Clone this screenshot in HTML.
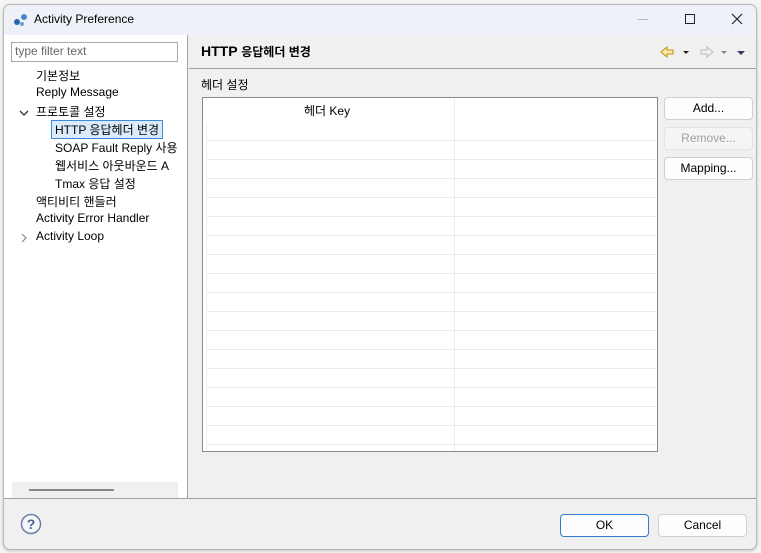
<!DOCTYPE html>
<html><head><meta charset="utf-8"><style>
*{margin:0;padding:0;box-sizing:border-box}
body{width:761px;height:553px;background:#f5f5f5;position:relative;overflow:hidden;font-family:"Liberation Sans","Noto Sans CJK KR",sans-serif;font-size:12px;color:#000}
.win{position:absolute;left:3px;top:4px;width:754px;height:546px;background:#f0f0f0;border:1px solid #b8b8b8;border-radius:7px;overflow:hidden;box-shadow:0 1px 3px rgba(0,0,0,.2)}
.title{position:absolute;left:0;top:0;width:100%;height:30px;background:#eef2f8}
.title span{position:absolute;left:30px;top:7px;font-size:12px}
.abs{position:absolute}
.left{position:absolute;left:0;top:30px;width:184px;height:463px;background:#fff;border-right:1px solid #a0a0a0}
.filter{position:absolute;left:7px;top:7px;width:167px;height:20px;border:1px solid #a8a8a8;color:#666;padding:1px 3px;font-size:12px}
.t{position:absolute;font-size:12px;white-space:nowrap}
.sel{border:1px solid #3b8bd8;background:#dcebfc;padding:0 3px;left:47px!important}
.btn{position:absolute;background:#fdfdfd;border:1px solid #d0d0d0;border-radius:4px;text-align:center;line-height:20px;font-size:12px}
.tbl{position:absolute;left:198px;top:92px;width:456px;height:355px;background:#fff;border:1px solid #8a8a8a}
.row{position:absolute;left:3px;width:450px;height:1px;background:#eaeaea}
</style></head><body>
<div class="win">
<div class="title">
<svg class="abs" style="left:9px;top:7px" width="16" height="16" viewBox="0 0 16 16"><circle cx="4" cy="10" r="3" fill="#2f62a8"/><circle cx="11" cy="5" r="3" fill="#4a86d0"/><circle cx="9" cy="12" r="2" fill="#6aa0e0"/></svg>
<span>Activity Preference</span>
<div class="abs" style="left:634px;top:14px;width:10px;height:1px;background:#bbb"></div>
<div class="abs" style="left:681px;top:9px;width:10px;height:10px;border:1px solid #222"></div>
<svg class="abs" style="left:727px;top:8px" width="12" height="12"><path d="M1 1L11 11M11 1L1 11" stroke="#222" stroke-width="1.2"/></svg>
</div>
<div class="left">
<div class="filter">type filter text</div>
<div class="t" style="left:32px;top:32px">기본정보</div>
<div class="t" style="left:32px;top:50px">Reply Message</div>
<svg class="abs" style="left:15px;top:74px" width="10" height="8"><path d="M1 2L5 6L9 2" stroke="#333" fill="none" stroke-width="1.3"/></svg>
<div class="t" style="left:32px;top:68px">프로토콜 설정</div>
<div class="t sel" style="top:85px">HTTP 응답헤더 변경</div>
<div class="t" style="left:51px;top:104px">SOAP Fault Reply 사용</div>
<div class="t" style="left:51px;top:122px">웹서비스 아웃바운드 A</div>
<div class="t" style="left:51px;top:140px">Tmax 응답 설정</div>
<div class="t" style="left:32px;top:158px">액티비티 핸들러</div>
<div class="t" style="left:32px;top:176px">Activity Error Handler</div>
<svg class="abs" style="left:16px;top:198px" width="8" height="10"><path d="M2 1L6 5L2 9" stroke="#888" fill="none" stroke-width="1.2"/></svg>
<div class="t" style="left:32px;top:194px">Activity Loop</div>
<div class="abs" style="left:8px;top:447px;width:166px;height:16px;background:#f0f0f0"></div>
<div class="abs" style="left:25px;top:454px;width:85px;height:2px;background:#888"></div>
</div>
<div class="abs" style="left:185px;top:63px;width:569px;height:1px;background:#a0a0a0"></div>
<div class="t" style="left:197px;top:38px;font-size:14px;font-weight:bold">HTTP <span style="font-size:12px">응답헤더 변경</span></div>
<svg class="abs" style="left:655px;top:40px" width="95" height="14"><path d="M2 7L8 2V5H14V9H8V12Z" fill="#fde8a8" stroke="#c8920c"/><path d="M24 6L27 9L30 6Z" fill="#222"/><path d="M54 7L48 2V5H42V9H48V12Z" fill="#f2f2f2" stroke="#bbb"/><path d="M62 6L65 9L68 6Z" fill="#888"/><path d="M78 6L82 10L86 6Z" fill="#333a6a"/></svg>
<div class="t" style="left:197px;top:71px">헤더 설정</div>
<div class="tbl">
<div class="t" style="left:101px;top:4px">헤더 Key</div>
<div class="abs" style="left:251px;top:0;width:1px;height:353px;background:#e8eef8"></div>
<div class="abs" style="left:3px;top:26px;width:1px;height:327px;background:#e8eef8"></div>
<div class="row" style="top:42px"></div><div class="row" style="top:61px"></div><div class="row" style="top:80px"></div><div class="row" style="top:99px"></div><div class="row" style="top:118px"></div><div class="row" style="top:137px"></div><div class="row" style="top:156px"></div><div class="row" style="top:175px"></div><div class="row" style="top:194px"></div><div class="row" style="top:213px"></div><div class="row" style="top:232px"></div><div class="row" style="top:251px"></div><div class="row" style="top:270px"></div><div class="row" style="top:289px"></div><div class="row" style="top:308px"></div><div class="row" style="top:327px"></div><div class="row" style="top:346px"></div>
</div>
<div class="btn" style="left:660px;top:92px;width:89px;height:23px">Add...</div>
<div class="btn" style="left:660px;top:122px;width:89px;height:23px;color:#a0a0a0;background:#f5f5f5;border-color:#e2e2e2">Remove...</div>
<div class="btn" style="left:660px;top:152px;width:89px;height:23px">Mapping...</div>
<div class="abs" style="left:0;top:493px;width:754px;height:1px;background:#a0a0a0"></div>
<svg class="abs" style="left:16px;top:508px" width="22" height="22"><circle cx="11" cy="11" r="9.5" fill="#f4f6fa" stroke="#6a7ea8" stroke-width="1.5"/><text x="11" y="16" text-anchor="middle" font-family="Liberation Sans" font-weight="bold" font-size="14" fill="#4a5f8a">?</text></svg>
<div class="btn" style="left:556px;top:509px;width:89px;height:23px;border-color:#2f7dd0">OK</div>
<div class="btn" style="left:654px;top:509px;width:89px;height:23px">Cancel</div>
</div>
</body></html>
